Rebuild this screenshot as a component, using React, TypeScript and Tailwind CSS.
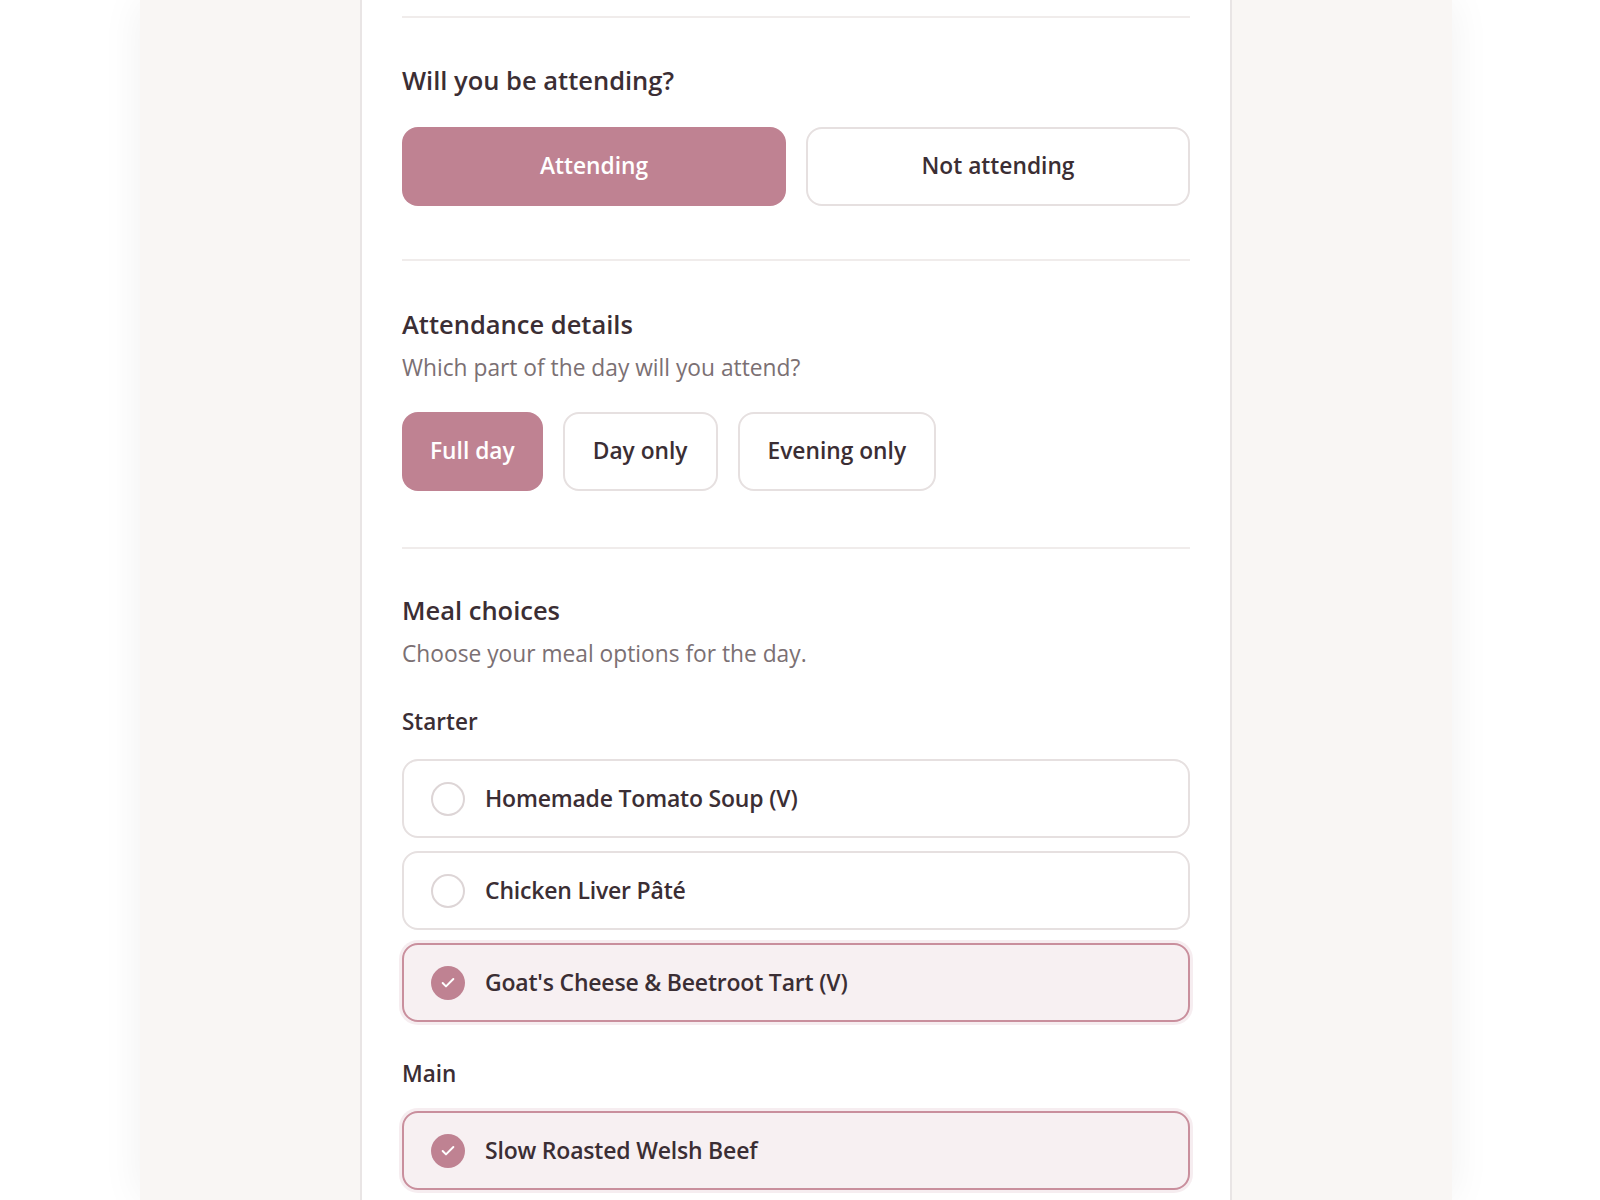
import { Check } from 'lucide-react';

const font = { fontFamily: '"Open Sans", "Noto Sans", sans-serif' };

function Divider() {
  return <div className="h-[2px] bg-[#f0eceb]" />;
}

function OptionRow({ label, selected }: { label: string; selected?: boolean }) {
  return (
    <div
      className={
        selected
          ? 'flex items-center h-[79px] pl-[27px] rounded-2xl border-2 border-[#c98f9d] bg-[#f7f0f2] ring-[3px] ring-[#c0839224]'
          : 'flex items-center h-[79px] pl-[27px] rounded-2xl border-2 border-[#e6e0e0] bg-white'
      }
    >
      {selected ? (
        <span className="w-[34px] h-[34px] rounded-full bg-[#bf8292] flex items-center justify-center">
          <Check className="w-4 h-4 text-white" strokeWidth={3} />
        </span>
      ) : (
        <span className="w-[34px] h-[34px] rounded-full border-2 border-[#ddd5d6] bg-white" />
      )}
      <span className="ml-[20px] text-[23px] font-semibold text-[#3b2e34] tracking-[-0.2px]">{label}</span>
    </div>
  );
}

export default function App() {
  return (
    <div className="h-[1200px] overflow-hidden bg-white flex justify-center pr-2" style={font}>
      <div className="w-[1312px] h-full bg-[#f9f6f4] shadow-[0_0_40px_rgba(0,0,0,0.06)] flex justify-center">
        <div className="w-[872px] h-full bg-white border-x-2 border-[#e9e5e5] px-10 pt-4">
          <Divider />

          {/* attending */}
          <section className="pt-[45px] pb-[53px]">
            <h2 className="text-[25.5px] leading-[34px] font-semibold text-[#3b2e34]">Will you be attending?</h2>
            <div className="mt-[30px] grid grid-cols-2 gap-5">
              <button className="h-[79px] rounded-2xl bg-[#bf8292] text-white text-[22.75px] font-semibold">
                Attending
              </button>
              <button className="h-[79px] rounded-2xl border-2 border-[#e6e0e0] bg-white text-[#3b2e34] text-[22.75px] font-semibold">
                Not attending
              </button>
            </div>
          </section>

          <Divider />

          {/* attendance details */}
          <section className="pt-[46px] pb-14">
            <h2 className="text-[25.5px] leading-[34px] font-semibold text-[#3b2e34]">Attendance details</h2>
            <p className="mt-3 text-[22.75px] leading-[30px] text-[#7b7073]">Which part of the day will you attend?</p>
            <div className="mt-[29px] flex gap-5">
              <button className="h-[79px] px-7 rounded-2xl bg-[#bf8292] text-white text-[22.75px] font-semibold">
                Full day
              </button>
              <button className="h-[79px] px-7 rounded-2xl border-2 border-[#e6e0e0] bg-white text-[#3b2e34] text-[22.75px] font-semibold">
                Day only
              </button>
              <button className="h-[79px] px-7 rounded-2xl border-2 border-[#e6e0e0] bg-white text-[#3b2e34] text-[22.75px] font-semibold">
                Evening only
              </button>
            </div>
          </section>

          <Divider />

          {/* meals */}
          <section className="pt-[44px]">
            <h2 className="text-[25.5px] leading-[34px] font-semibold text-[#3b2e34]">Meal choices</h2>
            <p className="mt-3 text-[22.75px] leading-[30px] text-[#7b7073]">Choose your meal options for the day.</p>

            <h3 className="mt-[38px] text-[22.5px] leading-[30px] font-semibold text-[#3b2e34]">Starter</h3>
            <div className="mt-[22px] flex flex-col gap-[13px]">
              <OptionRow label="Homemade Tomato Soup (V)" />
              <OptionRow label="Chicken Liver Pâté" />
              <OptionRow label="Goat's Cheese & Beetroot Tart (V)" selected />
            </div>

            <h3 className="mt-[37px] text-[22.5px] leading-[30px] font-semibold text-[#3b2e34]">Main</h3>
            <div className="mt-[22px] flex flex-col gap-[13px]">
              <OptionRow label="Slow Roasted Welsh Beef" selected />
            </div>
          </section>
        </div>
      </div>
    </div>
  );
}
